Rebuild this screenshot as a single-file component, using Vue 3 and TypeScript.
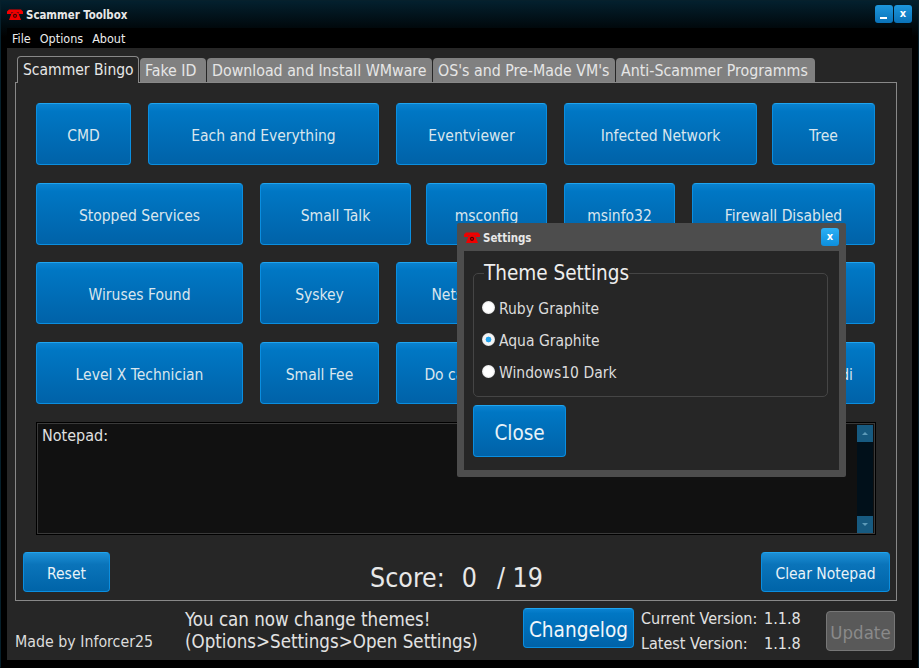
<template>
  <div class="window">
    <!-- Title bar -->
    <div class="titlebar">
      <svg class="phone" viewBox="0 0 16 11" width="16" height="11">
        <path d="M0 2.5 2 .6h12l2 1.9V5h-4.4V3H4.400V5H0z" fill="#f00000" />
        <path d="M4.800 3.600h1.400V2.800h3.600v.8h1.400L14 11H2z" fill="#f00000" />
        <circle cx="8" cy="6.800" r="2.100" fill="#4a0000" />
        <circle cx="8" cy="6.800" r=".9" fill="#f00000" />
      </svg>
      <span class="title">Scammer Toolbox</span>
      <div class="win-buttons">
        <button class="win-btn"><span class="min-bar"></span></button>
        <button class="win-btn">x</button>
      </div>
    </div>

    <!-- Menu -->
    <div class="menubar">
      <span v-for="item in menu" :key="item">{{ item }}</span>
    </div>

    <div class="content">
      <div class="tabs">
        <div
          v-for="(tab, i) in tabs"
          :key="tab.label"
          class="tab"
          :class="{ active: i === 0 }"
          :style="{ width: `${tab.width}px` }"
        >
          {{ tab.label }}
        </div>
      </div>

      <div class="tab-panel">
        <div class="bingo">
          <div v-for="(row, r) in rows" :key="r" class="bingo-row">
            <button
              v-for="cell in row"
              :key="cell.label"
              class="blue-btn"
              :style="{ width: `${cell.width}px`, marginLeft: `${cell.gap}px` }"
            >
              {{ cell.label }}
            </button>
          </div>
        </div>

        <div class="notepad">
          <div class="notepad-text">Notepad:</div>
          <div class="scrollbar">
            <div class="scroll-btn"><span class="arrow-up"></span></div>
            <div class="scroll-btn"><span class="arrow-down"></span></div>
          </div>
        </div>

        <div class="panel-bottom">
          <button class="blue-btn small reset">Reset</button>
          <div class="score">
            <span>Score:</span>
            <span class="score-value">0</span>
            <span class="score-total">/ 19</span>
          </div>
          <button class="blue-btn small clear">Clear Notepad</button>
        </div>
      </div>

      <div class="footer">
        <div class="made-by">Made by Inforcer25</div>
        <div class="notice">
          <div>You can now change themes!</div>
          <div>(Options&gt;Settings&gt;Open Settings)</div>
        </div>
        <button class="blue-btn changelog">Changelog</button>
        <div class="versions">
          <div class="version-line"><span>Current Version:</span><span>1.1.8</span></div>
          <div class="version-line"><span>Latest Version:</span><span>1.1.8</span></div>
        </div>
        <button class="update" disabled>Update</button>
      </div>
    </div>

    <!-- Settings dialog -->
    <div class="settings">
      <div class="settings-title">
        <svg class="phone" viewBox="0 0 16 11" width="16" height="11">
          <path d="M0 2.5 2 .6h12l2 1.9V5h-4.400V3H4.400V5H0z" fill="#f00000" />
          <path d="M4.800 3.600h1.400V2.800h3.600v.8h1.400L14 11H2z" fill="#f00000" />
          <circle cx="8" cy="6.800" r="2.100" fill="#4a0000" />
          <circle cx="8" cy="6.800" r=".9" fill="#f00000" />
        </svg>
        <span class="title">Settings</span>
        <button class="win-btn bright">x</button>
      </div>
      <div class="settings-body">
        <fieldset class="theme-box">
          <legend>Theme Settings</legend>
          <label v-for="theme in themes" :key="theme" class="radio-row">
            <input v-model="selected" type="radio" name="theme" :value="theme" />
            <span class="radio-label">{{ theme }}</span>
          </label>
        </fieldset>
        <button class="blue-btn close">Close</button>
      </div>
    </div>
  </div>
</template>

<script setup lang="ts">
import { ref } from 'vue'

interface Cell {
  label: string
  width: number
  gap: number
}

const menu = ['File', 'Options', 'About']

const tabs = [
  { label: 'Scammer Bingo', width: 122 },
  { label: 'Fake ID', width: 66 },
  { label: 'Download and Install WMware', width: 225 },
  { label: "OS's and Pre-Made VM's", width: 182 },
  { label: 'Anti-Scammer Programms', width: 199 },
]

const rows: Cell[][] = [
  [
    { label: 'CMD', width: 95, gap: 0 },
    { label: 'Each and Everything', width: 231, gap: 17 },
    { label: 'Eventviewer', width: 151, gap: 17 },
    { label: 'Infected Network', width: 193, gap: 17 },
    { label: 'Tree', width: 103, gap: 15 },
  ],
  [
    { label: 'Stopped Services', width: 207, gap: 0 },
    { label: 'Small Talk', width: 151, gap: 17 },
    { label: 'msconfig', width: 121, gap: 15 },
    { label: 'msinfo32', width: 111, gap: 17 },
    { label: 'Firewall Disabled', width: 183, gap: 17 },
  ],
  [
    { label: 'Wiruses Found', width: 207, gap: 0 },
    { label: 'Syskey', width: 119, gap: 17 },
    { label: 'Netstat', width: 122, gap: 17 },
    { label: 'Tech Support', width: 160, gap: 17 },
    { label: 'Trojan', width: 163, gap: 17 },
  ],
  [
    { label: 'Level X Technician', width: 207, gap: 0 },
    { label: 'Small Fee', width: 119, gap: 17 },
    { label: 'Do call back', width: 142, gap: 17 },
    { label: 'Refund', width: 223, gap: 17 },
    { label: 'Hindi', width: 80, gap: 17 },
  ],
]

const themes = ['Ruby Graphite', 'Aqua Graphite', 'Windows10 Dark']
const selected = ref('Aqua Graphite')
</script>

<style>
html,
body {
  margin: 0;
  background: #000;
}
</style>

<style scoped>
.window {
  position: relative;
  width: 919px;
  height: 668px;
  box-sizing: border-box;
  padding: 0 6px 7px;
  border: 1px solid #06202c;
  border-bottom-color: #000;
  background: linear-gradient(180deg, #03202e 0, #000 36px);
  font-family: 'DejaVu Sans Condensed', 'DejaVu Sans', sans-serif;
  font-stretch: condensed;
  color: #e2e2e2;
  overflow: hidden;
}

button {
  font-family: inherit;
  font-stretch: inherit;
  padding: 0;
  cursor: pointer;
}

.titlebar {
  display: flex;
  align-items: center;
  height: 27px;
}

.phone {
  flex: none;
  margin-right: 3px;
}

.title {
  font-size: 11.4px;
  font-weight: 700;
  color: #e8e8e8;
}

.win-buttons {
  margin-left: auto;
  display: flex;
  gap: 1px;
  margin-top: -1px;
}

.win-btn {
  position: relative;
  width: 18px;
  height: 18px;
  border: none;
  border-radius: 3px;
  background: linear-gradient(180deg, #1d97dd, #0a72b8);
  color: #fff;
  font-size: 11px;
  font-weight: 700;
  line-height: 16px;
}

.win-btn.bright {
  margin-left: auto;
  background: linear-gradient(180deg, #2bb0f5, #0d8edc);
}

.min-bar {
  position: absolute;
  left: 5px;
  bottom: 4px;
  width: 7px;
  height: 2px;
  background: #fff;
}

.menubar {
  display: flex;
  gap: 9px;
  height: 20px;
  padding: 1px 0 0 5px;
  box-sizing: border-box;
  align-items: center;
  font-size: 12.5px;
  background: #000;
  color: #ececec;
}

.content {
  height: 612px;
  box-sizing: border-box;
  background: #262626;
  padding: 8px 15px 0 8px;
}

.tabs {
  display: flex;
  align-items: flex-end;
  height: 26px;
  padding-left: 2px;
  gap: 1px;
}

.tab {
  box-sizing: border-box;
  height: 24px;
  padding-left: 5px;
  border-radius: 4px 4px 0 0;
  background: #808080;
  color: #e6e6e6;
  font-size: 15.8px;
  line-height: 25px;
  white-space: nowrap;
}

.tab.active {
  position: relative;
  z-index: 1;
  height: 27px;
  margin-bottom: -1px;
  padding-left: 5px;
  border: 1px solid #888;
  border-bottom: none;
  background: #262626;
  font-size: 15.5px;
  line-height: 26px;
}

.tab-panel {
  box-sizing: border-box;
  height: 519px;
  border: 1px solid #888;
}

.bingo {
  padding: 20px 0 0 20px;
}

.bingo-row {
  display: flex;
  margin-bottom: 18px;
}

.bingo-row:nth-child(2) {
  margin-bottom: 17px;
}

.blue-btn {
  flex: none;
  height: 62px;
  box-sizing: border-box;
  padding-top: 3px;
  border: 1px solid #0a8ee0;
  border-top-color: #1fa5f0;
  border-radius: 4px;
  background: linear-gradient(180deg, #0a82d0 0, #0077c4 12%, #0062a8 100%);
  color: #d9e6ee;
  font-size: 15.5px;
}

.notepad {
  display: flex;
  box-sizing: border-box;
  width: 840px;
  height: 113px;
  margin-left: 20px;
  border: 1px solid #000;
  outline: 1px solid #3a3a3a;
  outline-offset: -2px;
  background: #111;
}

.notepad-text {
  flex: 1;
  padding: 3px 5px;
  font-size: 16px;
  color: #e0e0e0;
}

.scrollbar {
  width: 16px;
  margin: 2px 2px 1px 0;
  display: flex;
  flex-direction: column;
  justify-content: space-between;
  background: #01101a;
}

.scroll-btn {
  display: flex;
  align-items: center;
  justify-content: center;
  height: 17px;
  background: #175a80;
}

.arrow-up,
.arrow-down {
  width: 0;
  height: 0;
  border-left: 3px solid transparent;
  border-right: 3px solid transparent;
}

.arrow-up {
  border-bottom: 3px solid #5d9ab8;
}

.arrow-down {
  border-top: 3px solid #5d9ab8;
}

.panel-bottom {
  display: grid;
  grid-template-columns: 1fr auto 1fr;
  align-items: start;
  padding: 17px 6px 0 7px;
}

.blue-btn.small {
  height: 40px;
  background: linear-gradient(180deg, #1c8fd6 0, #0a74ba 30%, #0064a8 100%);
  color: #e8f2f8;
}

.reset {
  width: 87px;
}

.clear {
  width: 129px;
  justify-self: end;
}

.score {
  display: flex;
  margin-top: 5px;
  font-size: 26.5px;
  line-height: 42px;
  color: #e8e8e8;
}

.score-value {
  margin-left: 17px;
}

.score-total {
  margin-left: 20px;
}

.footer {
  display: flex;
  height: 59px;
  position: relative;
}

.made-by {
  align-self: flex-end;
  width: 170px;
  margin-bottom: 9px;
  font-size: 15.8px;
  color: #dcdcdc;
}

.notice {
  width: 338px;
  padding-top: 8px;
  font-size: 18.6px;
  line-height: 22px;
  white-space: nowrap;
}

.blue-btn.changelog {
  width: 111px;
  height: 40px;
  margin-top: 7px;
  color: #f0f6fa;
  font-size: 20.6px;
}

.versions {
  width: 185px;
  padding: 5px 0 0 7px;
  font-size: 16px;
  line-height: 25px;
}

.version-line {
  display: flex;
}

.version-line span:first-child {
  width: 123px;
}

.update {
  width: 69px;
  height: 40px;
  margin-top: 10px;
  padding-top: 2px;
  border: 1px solid #777;
  border-radius: 4px;
  background: #595959;
  color: #8a8a8a;
  font-size: 18.5px;
  cursor: default;
}

/* Dialog sits on top of the bingo board */
.settings {
  position: absolute;
  left: 456px;
  top: 222px;
  width: 389px;
  height: 254px;
  box-sizing: border-box;
  padding: 0 7px 7px;
  border-radius: 2px;
  background: #4d4d4d;
}

.settings-title {
  display: flex;
  align-items: center;
  height: 28px;
}

.settings-title .title {
  padding-top: 2px;
}

.settings-body {
  height: 219px;
  box-sizing: border-box;
  padding: 11px 11px 0 9px;
  background: #262626;
}

.theme-box {
  height: 135px;
  box-sizing: border-box;
  margin: 0;
  padding: 0 0 0 8px;
  border: 1px solid #454545;
  border-radius: 5px;
}

.theme-box legend {
  margin-left: 2px;
  padding: 0;
  font-size: 20.5px;
  line-height: 22px;
  color: #eee;
}

.radio-row {
  display: flex;
  align-items: center;
  gap: 4px;
  height: 32px;
  font-size: 15.5px;
  color: #dcdcdc;
}

.radio-label {
  padding-top: 4px;
}

.radio-row:first-of-type {
  margin-top: 7px;
}

.radio-row input {
  appearance: none;
  flex: none;
  width: 13px;
  height: 13px;
  margin: 0;
  border-radius: 50%;
  background: radial-gradient(circle at 50% 50%, #fff 50%, #bbb 100%);
}

.radio-row input:checked {
  background: radial-gradient(circle at 50% 50%, #23a4ee 0 2.6px, #f4f4f4 3.2px 55%, #aaa 100%);
}

.blue-btn.close {
  display: block;
  width: 93px;
  height: 52px;
  margin-top: 8px;
  color: #e8f2f8;
  font-size: 20.5px;
}
</style>
